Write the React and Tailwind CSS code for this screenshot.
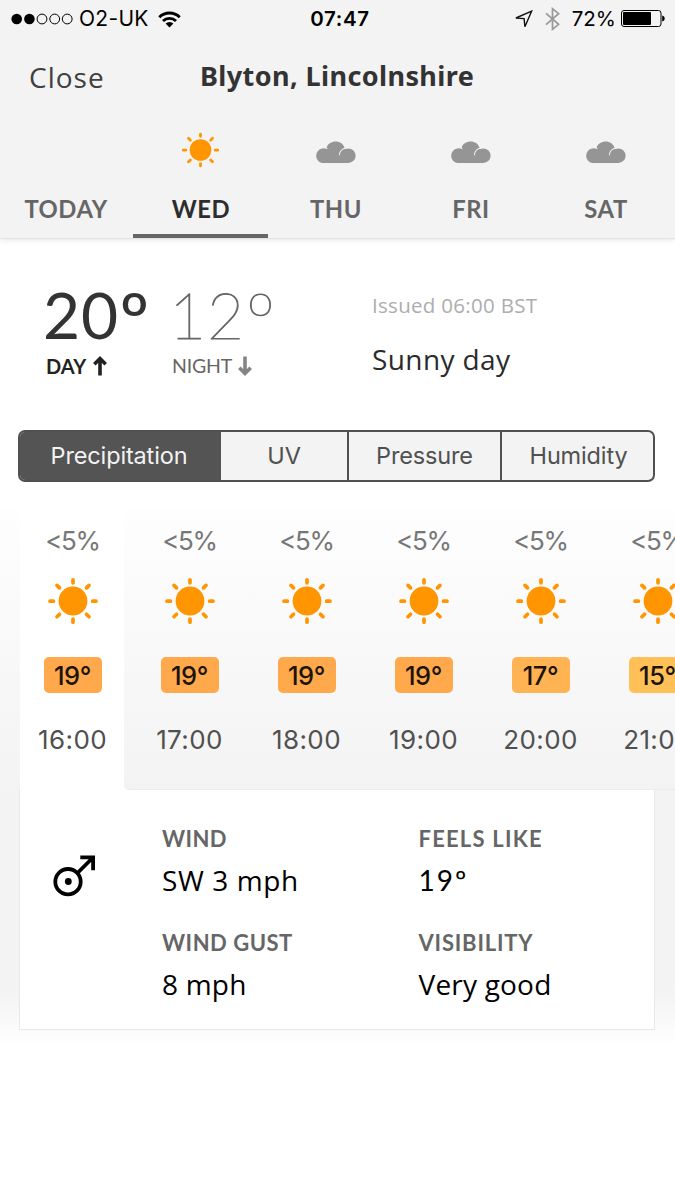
import React from "react";

const days = [
  { label: "TODAY", icon: null },
  { label: "WED", icon: "sun", active: true },
  { label: "THU", icon: "cloud" },
  { label: "FRI", icon: "cloud" },
  { label: "SAT", icon: "cloud" },
];

const hours = [
  { time: "16:00", temp: "19°", color: "bg-[#ffa94c]" },
  { time: "17:00", temp: "19°", color: "bg-[#ffa94c]" },
  { time: "18:00", temp: "19°", color: "bg-[#ffa94c]" },
  { time: "19:00", temp: "19°", color: "bg-[#ffa94c]" },
  { time: "20:00", temp: "17°", color: "bg-[#ffb352]" },
  { time: "21:00", temp: "15°", color: "bg-[#ffc057]" },
];

const details = [
  { label: "WIND", value: "SW 3 mph", spacing: "tracking-[0.4px]", font: "text-[28px] tracking-[0.6px]" },
  { label: "FEELS LIKE", value: "19º", spacing: "tracking-[1.2px]", font: "text-[28px] tracking-[2px] font-['Lato',sans-serif]" },
  { label: "WIND GUST", value: "8 mph", spacing: "tracking-[0.5px]", font: "text-[28px] tracking-[0.2px]" },
  { label: "VISIBILITY", value: "Very good", spacing: "tracking-[0.8px]", font: "text-[28px] tracking-[0.2px]" },
];

function Sun({ className }) {
  return (
    <svg className={className} viewBox="-26 -24 52 48" fill="none" stroke="#ff9500" strokeWidth="3.7" strokeLinecap="round">
      <circle r="14.4" fill="#ff9500" stroke="none" />
      <path d="M-23 0.2H-19.6M19.6 0.2H23M0 -21.2V-18.2M0 18.2V21.2M-16 -15.6L-13.5 -13.1M16 -15.6L13.5 -13.1M-16 15.8L-13.5 13.3M16 15.8L13.5 13.3" />
    </svg>
  );
}

function Cloud() {
  return (
    <svg className="mr-[2px] mt-[6px] h-[23px] w-[42px]" viewBox="0 0 42 23" fill="#959595">
      <path d="M8.3 22A7.4 7.4 0 0 1 8.3 7.4Q11 7.2 13.8 8.2L12.6 6.2C14.2 2.8 17.6 0.6 21.5 0.6C26 0.6 29.2 3 30.3 6.2L31 7.9Q33 7.4 34.3 7.4A7.2 7.2 0 0 1 34.3 22Z" />
      <path d="M25.3 14.2C25.6 10.4 28 7.6 32.4 7" fill="none" stroke="#f3f3f3" strokeWidth="1.1" />
    </svg>
  );
}

function StatusBar() {
  return (
    <div className="grid h-[38px] grid-cols-3 items-center font-['Inter','Liberation_Sans',sans-serif] text-black">
      <div className="flex items-center pl-[11px]">
        <svg className="h-[12px] w-[62px]" viewBox="0 0 62 12" fill="none" stroke="#000" strokeWidth="1">
          <circle cx="5.7" cy="6" r="5.3" fill="#000" stroke="none" />
          <circle cx="18.4" cy="6" r="5.3" fill="#000" stroke="none" />
          <circle cx="31" cy="6" r="4.9" />
          <circle cx="43.7" cy="6" r="4.9" />
          <circle cx="56.2" cy="6" r="4.9" />
        </svg>
        <span className="ml-[6px] text-[21px] leading-[38px] tracking-[0.3px]">O2-UK</span>
        <svg className="ml-[9px] h-[17px] w-[23px]" viewBox="0 0 23 17" fill="none" stroke="#000" strokeWidth="2.9">
          <path d="M1.3 6.2A14.6 14.6 0 0 1 21.7 6.2M5 10A9.3 9.3 0 0 1 18 10" />
          <path d="M11.5 16.4L7.6 12.6A5.6 5.6 0 0 1 15.4 12.6Z" fill="#000" stroke="none" />
        </svg>
      </div>
      <div className="pl-[5px] text-center text-[20.5px] font-semibold leading-[38px] tracking-[0.7px]">07:47</div>
      <div className="flex items-center justify-end pr-[10px]">
        <svg className="h-[18px] w-[18px]" viewBox="0 0 18 18" fill="none" stroke="#111" strokeWidth="1.4">
          <path d="M16.6 1.2L0.9 8L9.1 8.6L9.9 16.8Z" />
        </svg>
        <svg className="ml-[12px] h-[24px] w-[15px]" viewBox="0 0 15 24" fill="none" stroke="#999" strokeWidth="1.7">
          <path d="M1 6.3L13.6 17.3L7.5 22.3V1.7L13.6 6.7L1 17.7" />
        </svg>
        <span className="ml-[12px] text-[20.5px] leading-[38px]">72%</span>
        <svg className="-mt-[1px] ml-[5px] h-[17px] w-[44px]" viewBox="0 0 44 17" fill="none">
          <rect x="0.5" y="0.5" width="39.5" height="16" rx="2.5" stroke="#000" />
          <rect x="2" y="2" width="28" height="13" rx="1" fill="#000" />
          <path d="M41.2 5.5C44.5 6 44.5 11 41.2 11.5Z" fill="#000" />
        </svg>
      </div>
    </div>
  );
}

function Hour({ hour }) {
  return (
    <div className="flex w-full flex-col items-center font-['Inter','Liberation_Sans',sans-serif]">
      <div className="mt-[13px] h-[36px] text-[26px] leading-[36px] tracking-[-1.3px] text-[#777]">&lt;5%</div>
      <Sun className="mt-[18px] h-[48px] w-[52px]" />
      <div className={`mt-[32px] flex h-[36px] w-[58px] items-center justify-center rounded-[5px] pt-[1px] text-[25.5px] font-medium leading-[33px] tracking-[-0.4px] text-[#1c1408] ${hour.color}`}>
        {hour.temp}
      </div>
      <div className="mt-[29px] h-[36px] text-[26px] leading-[36px] tracking-[0.4px] text-[#505050]">{hour.time}</div>
    </div>
  );
}

export default function App() {
  return (
    <div className="h-[1200px] w-[675px] overflow-hidden bg-white font-['Open_Sans','Noto_Sans',sans-serif]">
      <header className="flex h-[238px] flex-col bg-[#f3f3f3] shadow-[0_1px_0_#e2e2e2,0_2px_6px_rgba(0,0,0,0.1)]">
        <StatusBar />
        <div className="flex h-[78px] items-center pb-[1px]">
          <button className="ml-[29px] w-[171px] text-left text-[28px] tracking-[1px] text-[#404040]">Close</button>
          <h1 className="whitespace-nowrap text-[27px] font-bold tracking-[0.4px] text-[#333] font-['Noto_Sans',sans-serif]">Blyton, Lincolnshire</h1>
        </div>
        <nav className="-ml-[2px] flex flex-1">
          {days.map((d) => (
            <div
              key={d.label}
              className={`flex w-[135px] shrink-0 flex-col items-center border-b-4 ${d.active ? "border-[#666] text-[#2d2d2d]" : "border-transparent text-[#666]"}`}
            >
              <div className="mt-[13px] flex h-[41px] items-center">
                {d.icon === "sun" && <Sun className="h-[36px] w-[39px]" />}
                {d.icon === "cloud" && <Cloud />}
              </div>
              <span className="mt-[20px] pl-[1px] text-[23.8px] font-bold leading-[38px] tracking-[0.5px] font-['Lato',sans-serif]">{d.label}</span>
            </div>
          ))}
        </nav>
      </header>

      <section className="flex h-[192px]">
        <div className="ml-[43px] w-[128px] pt-[39px] text-[#333]">
          <div className="flex h-[75px] text-[64px] leading-[76px] tracking-[1px] font-['Lato',sans-serif]">
            <span>20</span>
            <span className="pt-[3px] text-[75px]">º</span>
          </div>
          <div className="flex items-center pl-[3px] text-[20px] font-bold leading-[28px] text-[#222] font-['Lato',sans-serif]">
            DAY
            <svg className="ml-[7px] h-[20px] w-[14px]" viewBox="0 0 14 20" fill="none" stroke="#222" strokeWidth="3.6">
              <path d="M7 19.5V3M1.3 8.3L7 2.6L12.7 8.3" />
            </svg>
          </div>
        </div>
        <div className="w-[201px] pt-[39px] text-[#666]">
          <div className="-ml-[2px] flex h-[75px] text-[64px] font-thin leading-[76px] tracking-[1px] [-webkit-text-stroke:1px_#666] font-['Lato',sans-serif]">
            <span>12</span>
            <span className="pt-[3px] text-[75px]">º</span>
          </div>
          <div className="flex items-center pl-[1px] text-[19.5px] leading-[28px] tracking-[-0.2px] font-['Lato',sans-serif]">
            NIGHT
            <svg className="ml-[6px] h-[20px] w-[14px]" viewBox="0 0 14 20" fill="none" stroke="#858585" strokeWidth="3.6">
              <path d="M7 0.5V17M1.3 11.7L7 17.4L12.7 11.7" />
            </svg>
          </div>
        </div>
        <div className="pt-[52px]">
          <div className="text-[20.5px] leading-[30px] tracking-[0.3px] text-[#adadad]">Issued 06:00 BST</div>
          <div className="mt-[17px] text-[28px] leading-[44px] tracking-[0.4px] text-[#2b2b2b]">Sunny day</div>
        </div>
      </section>

      <div className="mx-[18px] flex h-[52px] w-[637px] overflow-hidden rounded-[7px] border-2 border-[#505050] bg-[#f3f3f3] text-[23.5px] tracking-[-0.15px] text-[#505050] font-['Inter','Liberation_Sans',sans-serif]">
        <div className="flex w-[201px] items-center justify-center bg-[#545454] pr-[3px] text-[#f3f3f3]">Precipitation</div>
        <div className="flex w-[126px] items-center justify-center">UV</div>
        <div className="flex w-[155px] items-center justify-center border-x-2 border-[#505050]">Pressure</div>
        <div className="flex w-[151px] items-center justify-center pl-[2px]">Humidity</div>
      </div>

      <main className="mt-[28px] h-[535px] bg-[linear-gradient(to_bottom,#fefefe_0px,#f3f3f3_280px,#f3f3f3_480px,#fafafa_515px,#fff_535px)]">
        <div className="flex h-[280px]">
          <div className="ml-[20px] w-[104px] shrink-0 bg-white pl-[1px]">
            <Hour hour={hours[0]} />
          </div>
          <div className="min-w-0 flex-1 overflow-hidden bg-white">
            <div className="flex h-full rounded-bl-[5px] border-b border-[#ececec] bg-[linear-gradient(to_bottom,#fefefe,#f3f3f3)] pl-[7px]">
              {hours.slice(1).map((h) => (
                <div key={h.time} className="w-[117px] shrink-0">
                  <Hour hour={h} />
                </div>
              ))}
            </div>
          </div>
        </div>
        <div className="ml-[19px] flex h-[240px] w-[636px] border-b border-l border-r border-[#e8e8e8] bg-white">
          <svg className="ml-[32px] mt-[63px] h-[45px] w-[46px]" viewBox="0 0 46 45" fill="none" stroke="#000" strokeWidth="3.8">
            <circle cx="16" cy="28.7" r="12.7" />
            <circle cx="16.3" cy="28.5" r="3.4" fill="#000" stroke="none" />
            <path d="M25.5 20L41 4.5M28.3 4.4H41.1V17.2" />
          </svg>
          <div className="ml-[64px] mt-[32px] grid grid-cols-[256.5px_200px] auto-rows-[103.5px]">
            {details.map((d) => (
              <div key={d.label}>
                <div className={`text-[22px] font-bold leading-[34px] text-[#666] font-['Lato',sans-serif] ${d.spacing}`}>{d.label}</div>
                <div className={`mt-[3px] leading-[42px] text-black ${d.font}`}>{d.value}</div>
              </div>
            ))}
          </div>
        </div>
      </main>
    </div>
  );
}
